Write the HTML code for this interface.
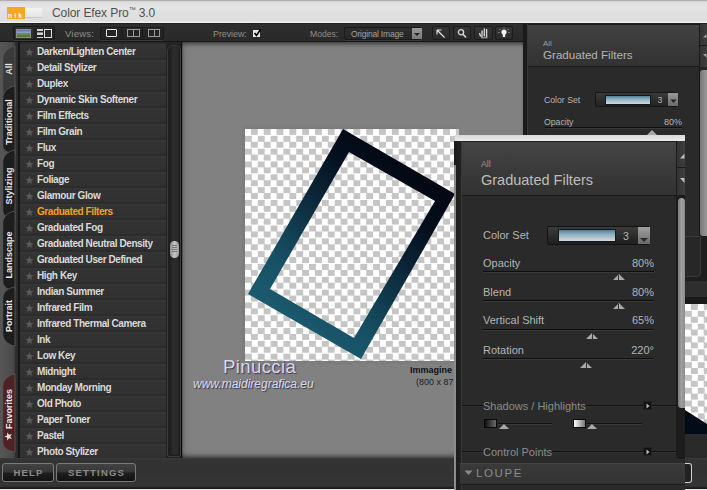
<!DOCTYPE html>
<html><head><meta charset="utf-8">
<style>
*{margin:0;padding:0;box-sizing:border-box}
html,body{width:707px;height:490px;overflow:hidden;background:#2a2a2a;font-family:"Liberation Sans",sans-serif}
div,span,svg{position:absolute}
.tb{font-size:9px;color:#8e8e8e;white-space:nowrap;line-height:10px}
.grp{background:#242424;border:1px solid #1a1a1a;border-radius:2px;box-shadow:inset 0 1px 0 #2e2e2e,0 1px 0 #3a3a3a}
.ib{background:linear-gradient(#353535,#2a2a2a);border:1px solid #1c1c1c;border-radius:2px}
.row{left:0;width:146px;height:16px;background:linear-gradient(#373737 0,#373737 1px,#333 2px,#313131 13px,#2b2b2b 15px)}
.row span{left:17px;top:2px;font-size:10px;font-weight:bold;color:#dedede;white-space:nowrap;letter-spacing:-0.42px;line-height:12px;color:#dadada}
.row svg{left:5px;top:3.5px}
.btn{top:5px;height:19px;border:1px solid #7a7a7a;border-radius:3px;background:linear-gradient(#424242,#363636 48%,#1e1e1e 52%,#121212);color:#8a8a8a;font-size:9.5px;font-weight:bold;letter-spacing:1.2px;text-indent:1.2px;text-align:center;line-height:19px}
.lbl{font-size:11px;color:#b4b4b4;white-space:nowrap;line-height:12px}
.val{font-size:11px;color:#b4b4b4;white-space:nowrap;line-height:12px;text-align:right}
.sl{height:1px;background:#0e0e0e;box-shadow:0 1px 0 #3a3a3a}
.tri{width:0;height:0;border-left:6px solid transparent;border-right:6px solid transparent;border-bottom:6px solid #a8a8a8}
.tl{font-size:9px;font-weight:bold;color:#e6e6e6;white-space:nowrap;transform:rotate(-90deg);transform-origin:0 0;line-height:10px}
</style></head><body>

<div style="left:0;top:0;width:707px;height:24px;background:linear-gradient(#adadad 0,#adadad 1px,#d8d8d8 1px,#e2e2e2 4px,#e6e6e6 8px,#e0e0e0 12px,#dedede 21px,#f2f2f2 22.5px,#f2f2f2 23.3px,#202020 23.5px)"></div>
<div style="left:7px;top:7px;width:18px;height:12px;background:#f5a623"></div>
<div style="left:8px;top:12px;font-size:7px;font-weight:bold;color:#fff;letter-spacing:2px;line-height:7px">nik</div>
<div style="left:25px;top:8px;width:17px;height:10px;background:linear-gradient(#f4f4f4,#e4e4e4);border-bottom:1px solid #c8c8c8"></div>
<div style="left:52px;top:6px;font-size:12px;color:#505050;white-space:nowrap;line-height:14px;letter-spacing:-0.1px">Color Efex Pro<span style="position:relative;font-size:7px;top:-5px">&#8482;</span> 3.0</div>

<div style="left:0;top:24px;width:524px;height:18px;background:linear-gradient(#2e2e2e,#292929);border-bottom:1px solid #161616"></div>
<div class="grp" style="left:13px;top:26px;width:42px;height:14px"></div>
<div style="left:15px;top:28px;width:18px;height:11px;background:#333;border-radius:1px"></div>
<div style="left:16px;top:29px;width:15px;height:9px;border:1px solid #8a8aa8;background:linear-gradient(#5a78b0 0,#8aa2c8 40%,#6a8a50 55%,#4a7030 100%)"></div>
<div style="left:37px;top:29px;width:5.5px;height:1.5px;background:#d0d0d0"></div>
<div style="left:37px;top:31.5px;width:5.5px;height:1px;background:#888"></div>
<div style="left:37px;top:33px;width:5.5px;height:1.5px;background:#d0d0d0"></div>
<div style="left:37px;top:36.5px;width:5.5px;height:1.5px;background:#d0d0d0"></div>
<div style="left:44px;top:29px;width:8px;height:9px;border:1px solid #e0e0e0;background:#2a2a2a"></div>
<div class="tb" style="left:65px;top:29px;font-size:9.5px;letter-spacing:0.2px">Views:</div>
<div class="grp" style="left:100px;top:27px;width:64px;height:13px"></div>
<div style="left:121px;top:28px;width:1px;height:11px;background:#1c1c1c"></div>
<div style="left:142px;top:28px;width:1px;height:11px;background:#1c1c1c"></div>
<div style="left:106px;top:29px;width:11px;height:8px;border:1.5px solid #e8e8e8;border-radius:1px"></div>
<div style="left:127px;top:29px;width:13px;height:8px;border:1px solid #9a9a9a"></div>
<div style="left:133px;top:29px;width:1px;height:8px;background:#9a9a9a"></div>
<div style="left:148px;top:29px;width:12px;height:8px;border:1px solid #9a9a9a"></div>
<div style="left:154px;top:29px;width:1px;height:8px;background:#9a9a9a"></div>
<div class="tb" style="left:213px;top:29px;font-size:9px;letter-spacing:-0.1px">Preview:</div>
<div style="left:253px;top:30px;width:7px;height:7px;background:#e8e8e8"></div>
<svg style="left:252px;top:28px" width="10" height="10" viewBox="0 0 10 10"><path d="M2.5 5 L4.5 7.5 L8.5 1.5" stroke="#000" stroke-width="1.6" fill="none"/></svg>
<div class="tb" style="left:310px;top:29px;font-size:8.6px;letter-spacing:0px">Modes:</div>
<div class="grp" style="left:344px;top:27px;width:78px;height:13px;background:linear-gradient(#2e2e2e,#262626)"></div>
<div class="tb" style="left:351px;top:29px;font-size:8.5px;color:#a0a0a0;letter-spacing:-0.2px">Original Image</div>
<div style="left:412px;top:28px;width:10px;height:11px;background:linear-gradient(#9a9a9a,#7a7a7a)"></div>
<div class="tri" style="left:414px;top:33px;border-left-width:3px;border-right-width:3px;border-bottom:none;border-top:3px solid #222"></div>
<div class="ib" style="left:432px;top:26px;width:18px;height:14px"></div>
<svg style="left:435px;top:28px" width="12" height="11" viewBox="0 0 12 11"><path d="M2.5 2.5 L9.5 9.5 M2 2 L2 6.5 M2 2 L6.5 2" stroke="#e8e8e8" stroke-width="1.1" fill="none"/></svg>
<div class="ib" style="left:453px;top:26px;width:18px;height:14px"></div>
<svg style="left:456px;top:28px" width="12" height="11" viewBox="0 0 12 11"><circle cx="5" cy="4.3" r="2.6" stroke="#d8d8d8" stroke-width="1.3" fill="none"/><path d="M7 6.3 L10 9.5" stroke="#d8d8d8" stroke-width="1.6"/></svg>
<div class="ib" style="left:474px;top:26px;width:19px;height:14px"></div>
<svg style="left:477px;top:27px" width="13" height="12" viewBox="0 0 13 12"><path d="M5 10.5 L5 3.5 M7.3 9.5 L7.3 1.5 M9.6 10.5 L9.6 2 M2.5 6 L3.6 9.5" stroke="#dcdcdc" stroke-width="1.3" fill="none"/><path d="M4 10.8 L10.5 10.8" stroke="#aaa" stroke-width="1"/></svg>
<div class="ib" style="left:495px;top:26px;width:18px;height:14px"></div>
<svg style="left:497px;top:27px" width="14" height="12" viewBox="0 0 14 12"><circle cx="7" cy="5" r="2.6" fill="#f0f0f0"/><rect x="5.8" y="7" width="2.4" height="3" fill="#f0f0f0"/><path d="M7 0.5 L7 1.5 M2.5 2 L3.5 3 M11.5 2 L10.5 3 M1.5 5.5 L2.5 5.5 M12.5 5.5 L11.5 5.5" stroke="#bbb" stroke-width="0.9"/></svg>
<div style="left:522px;top:42px;width:1px;height:416px;background:#9a9a9a"></div>

<div style="left:0;top:42px;width:20.5px;height:416px;background:linear-gradient(90deg,#565656 0,#4c4c4c 12px,#404040 14.5px,#2e2e2e 15px,#2a2a2a 18px,#161616 18.5px)"></div>
<svg style="left:0;top:0" width="20" height="490" viewBox="0 0 20 490"><path d="M15,46 L15,106 C8,105 2.8,103 2.8,97 L2.8,59 C2.8,53 8,47 15,46 Z" fill="#3a3a3a" stroke="#5a5a5a" stroke-width="0.8"/><path d="M15,86 L15,154 C8,153 2.8,151 2.8,145 L2.8,98 C2.8,92 8,87 15,86 Z" fill="#1d1d1d" stroke="#5a5a5a" stroke-width="0.8"/><path d="M15,150 L15,220 C8,219 2.8,216 2.8,210 L2.8,162 C2.8,156 8,151 15,150 Z" fill="#1d1d1d" stroke="#5a5a5a" stroke-width="0.8"/><path d="M15,211 L15,291 C8,290 2.8,287 2.8,281 L2.8,223 C2.8,217 8,212 15,211 Z" fill="#1d1d1d" stroke="#5a5a5a" stroke-width="0.8"/><path d="M15,287 L15,346 C8,345 2.8,340 2.8,334 L2.8,298 C2.8,292 8,288 15,287 Z" fill="#1d1d1d" stroke="#5a5a5a" stroke-width="0.8"/><path d="M15,374 L15,452 C8,451 2.8,448 2.8,442 L2.8,386 C2.8,380 8,375 15,374 Z" fill="#4e2124" stroke="#5a5a5a" stroke-width="0.8"/></svg>
<div class="tl" style="left:3.5px;top:98.5px;width:60px;text-align:center">All</div>
<div class="tl" style="left:3.5px;top:152px;width:60px;text-align:center">Traditional</div>
<div class="tl" style="left:3.5px;top:215.5px;width:60px;text-align:center">Stylizing</div>
<div class="tl" style="left:3.5px;top:285px;width:60px;text-align:center">Landscape</div>
<div class="tl" style="left:3.5px;top:346px;width:60px;text-align:center">Portrait</div>
<div class="tl" style="left:3.5px;top:429px;width:40px;text-align:center">Favorites</div>
<svg style="left:4px;top:431.5px;transform:rotate(-90deg)" width="9" height="9" viewBox="0 0 9 9"><path d="M4.50,0.30 L5.56,3.04 L8.49,3.20 L6.21,5.06 L6.97,7.90 L4.50,6.30 L2.03,7.90 L2.79,5.06 L0.51,3.20 L3.44,3.04Z" fill="#e0e0e0"/></svg>
<div style="left:20px;top:42px;width:146px;height:416px;background:#2a2a2a"></div>
<div class="row" style="left:20px;top:44px"><svg width="9" height="9" viewBox="0 0 9 9"><path d="M4.50,0.30 L5.56,3.04 L8.49,3.20 L6.21,5.06 L6.97,7.90 L4.50,6.30 L2.03,7.90 L2.79,5.06 L0.51,3.20 L3.44,3.04Z" fill="#5c5c5c"/></svg><span>Darken/Lighten Center</span></div>
<div class="row" style="left:20px;top:60px"><svg width="9" height="9" viewBox="0 0 9 9"><path d="M4.50,0.30 L5.56,3.04 L8.49,3.20 L6.21,5.06 L6.97,7.90 L4.50,6.30 L2.03,7.90 L2.79,5.06 L0.51,3.20 L3.44,3.04Z" fill="#5c5c5c"/></svg><span>Detail Stylizer</span></div>
<div class="row" style="left:20px;top:76px"><svg width="9" height="9" viewBox="0 0 9 9"><path d="M4.50,0.30 L5.56,3.04 L8.49,3.20 L6.21,5.06 L6.97,7.90 L4.50,6.30 L2.03,7.90 L2.79,5.06 L0.51,3.20 L3.44,3.04Z" fill="#5c5c5c"/></svg><span>Duplex</span></div>
<div class="row" style="left:20px;top:92px"><svg width="9" height="9" viewBox="0 0 9 9"><path d="M4.50,0.30 L5.56,3.04 L8.49,3.20 L6.21,5.06 L6.97,7.90 L4.50,6.30 L2.03,7.90 L2.79,5.06 L0.51,3.20 L3.44,3.04Z" fill="#5c5c5c"/></svg><span>Dynamic Skin Softener</span></div>
<div class="row" style="left:20px;top:108px"><svg width="9" height="9" viewBox="0 0 9 9"><path d="M4.50,0.30 L5.56,3.04 L8.49,3.20 L6.21,5.06 L6.97,7.90 L4.50,6.30 L2.03,7.90 L2.79,5.06 L0.51,3.20 L3.44,3.04Z" fill="#5c5c5c"/></svg><span>Film Effects</span></div>
<div class="row" style="left:20px;top:124px"><svg width="9" height="9" viewBox="0 0 9 9"><path d="M4.50,0.30 L5.56,3.04 L8.49,3.20 L6.21,5.06 L6.97,7.90 L4.50,6.30 L2.03,7.90 L2.79,5.06 L0.51,3.20 L3.44,3.04Z" fill="#5c5c5c"/></svg><span>Film Grain</span></div>
<div class="row" style="left:20px;top:140px"><svg width="9" height="9" viewBox="0 0 9 9"><path d="M4.50,0.30 L5.56,3.04 L8.49,3.20 L6.21,5.06 L6.97,7.90 L4.50,6.30 L2.03,7.90 L2.79,5.06 L0.51,3.20 L3.44,3.04Z" fill="#5c5c5c"/></svg><span>Flux</span></div>
<div class="row" style="left:20px;top:156px"><svg width="9" height="9" viewBox="0 0 9 9"><path d="M4.50,0.30 L5.56,3.04 L8.49,3.20 L6.21,5.06 L6.97,7.90 L4.50,6.30 L2.03,7.90 L2.79,5.06 L0.51,3.20 L3.44,3.04Z" fill="#5c5c5c"/></svg><span>Fog</span></div>
<div class="row" style="left:20px;top:172px"><svg width="9" height="9" viewBox="0 0 9 9"><path d="M4.50,0.30 L5.56,3.04 L8.49,3.20 L6.21,5.06 L6.97,7.90 L4.50,6.30 L2.03,7.90 L2.79,5.06 L0.51,3.20 L3.44,3.04Z" fill="#5c5c5c"/></svg><span>Foliage</span></div>
<div class="row" style="left:20px;top:188px"><svg width="9" height="9" viewBox="0 0 9 9"><path d="M4.50,0.30 L5.56,3.04 L8.49,3.20 L6.21,5.06 L6.97,7.90 L4.50,6.30 L2.03,7.90 L2.79,5.06 L0.51,3.20 L3.44,3.04Z" fill="#5c5c5c"/></svg><span>Glamour Glow</span></div>
<div class="row" style="left:20px;top:204px"><svg width="9" height="9" viewBox="0 0 9 9"><path d="M4.50,0.30 L5.56,3.04 L8.49,3.20 L6.21,5.06 L6.97,7.90 L4.50,6.30 L2.03,7.90 L2.79,5.06 L0.51,3.20 L3.44,3.04Z" fill="#5c5c5c"/></svg><span style="color:#f5a01e">Graduated Filters</span></div>
<div class="row" style="left:20px;top:220px"><svg width="9" height="9" viewBox="0 0 9 9"><path d="M4.50,0.30 L5.56,3.04 L8.49,3.20 L6.21,5.06 L6.97,7.90 L4.50,6.30 L2.03,7.90 L2.79,5.06 L0.51,3.20 L3.44,3.04Z" fill="#5c5c5c"/></svg><span>Graduated Fog</span></div>
<div class="row" style="left:20px;top:236px"><svg width="9" height="9" viewBox="0 0 9 9"><path d="M4.50,0.30 L5.56,3.04 L8.49,3.20 L6.21,5.06 L6.97,7.90 L4.50,6.30 L2.03,7.90 L2.79,5.06 L0.51,3.20 L3.44,3.04Z" fill="#5c5c5c"/></svg><span>Graduated Neutral Density</span></div>
<div class="row" style="left:20px;top:252px"><svg width="9" height="9" viewBox="0 0 9 9"><path d="M4.50,0.30 L5.56,3.04 L8.49,3.20 L6.21,5.06 L6.97,7.90 L4.50,6.30 L2.03,7.90 L2.79,5.06 L0.51,3.20 L3.44,3.04Z" fill="#5c5c5c"/></svg><span>Graduated User Defined</span></div>
<div class="row" style="left:20px;top:268px"><svg width="9" height="9" viewBox="0 0 9 9"><path d="M4.50,0.30 L5.56,3.04 L8.49,3.20 L6.21,5.06 L6.97,7.90 L4.50,6.30 L2.03,7.90 L2.79,5.06 L0.51,3.20 L3.44,3.04Z" fill="#5c5c5c"/></svg><span>High Key</span></div>
<div class="row" style="left:20px;top:284px"><svg width="9" height="9" viewBox="0 0 9 9"><path d="M4.50,0.30 L5.56,3.04 L8.49,3.20 L6.21,5.06 L6.97,7.90 L4.50,6.30 L2.03,7.90 L2.79,5.06 L0.51,3.20 L3.44,3.04Z" fill="#5c5c5c"/></svg><span>Indian Summer</span></div>
<div class="row" style="left:20px;top:300px"><svg width="9" height="9" viewBox="0 0 9 9"><path d="M4.50,0.30 L5.56,3.04 L8.49,3.20 L6.21,5.06 L6.97,7.90 L4.50,6.30 L2.03,7.90 L2.79,5.06 L0.51,3.20 L3.44,3.04Z" fill="#5c5c5c"/></svg><span>Infrared Film</span></div>
<div class="row" style="left:20px;top:316px"><svg width="9" height="9" viewBox="0 0 9 9"><path d="M4.50,0.30 L5.56,3.04 L8.49,3.20 L6.21,5.06 L6.97,7.90 L4.50,6.30 L2.03,7.90 L2.79,5.06 L0.51,3.20 L3.44,3.04Z" fill="#5c5c5c"/></svg><span>Infrared Thermal Camera</span></div>
<div class="row" style="left:20px;top:332px"><svg width="9" height="9" viewBox="0 0 9 9"><path d="M4.50,0.30 L5.56,3.04 L8.49,3.20 L6.21,5.06 L6.97,7.90 L4.50,6.30 L2.03,7.90 L2.79,5.06 L0.51,3.20 L3.44,3.04Z" fill="#5c5c5c"/></svg><span>Ink</span></div>
<div class="row" style="left:20px;top:348px"><svg width="9" height="9" viewBox="0 0 9 9"><path d="M4.50,0.30 L5.56,3.04 L8.49,3.20 L6.21,5.06 L6.97,7.90 L4.50,6.30 L2.03,7.90 L2.79,5.06 L0.51,3.20 L3.44,3.04Z" fill="#5c5c5c"/></svg><span>Low Key</span></div>
<div class="row" style="left:20px;top:364px"><svg width="9" height="9" viewBox="0 0 9 9"><path d="M4.50,0.30 L5.56,3.04 L8.49,3.20 L6.21,5.06 L6.97,7.90 L4.50,6.30 L2.03,7.90 L2.79,5.06 L0.51,3.20 L3.44,3.04Z" fill="#5c5c5c"/></svg><span>Midnight</span></div>
<div class="row" style="left:20px;top:380px"><svg width="9" height="9" viewBox="0 0 9 9"><path d="M4.50,0.30 L5.56,3.04 L8.49,3.20 L6.21,5.06 L6.97,7.90 L4.50,6.30 L2.03,7.90 L2.79,5.06 L0.51,3.20 L3.44,3.04Z" fill="#5c5c5c"/></svg><span>Monday Morning</span></div>
<div class="row" style="left:20px;top:396px"><svg width="9" height="9" viewBox="0 0 9 9"><path d="M4.50,0.30 L5.56,3.04 L8.49,3.20 L6.21,5.06 L6.97,7.90 L4.50,6.30 L2.03,7.90 L2.79,5.06 L0.51,3.20 L3.44,3.04Z" fill="#5c5c5c"/></svg><span>Old Photo</span></div>
<div class="row" style="left:20px;top:412px"><svg width="9" height="9" viewBox="0 0 9 9"><path d="M4.50,0.30 L5.56,3.04 L8.49,3.20 L6.21,5.06 L6.97,7.90 L4.50,6.30 L2.03,7.90 L2.79,5.06 L0.51,3.20 L3.44,3.04Z" fill="#5c5c5c"/></svg><span>Paper Toner</span></div>
<div class="row" style="left:20px;top:428px"><svg width="9" height="9" viewBox="0 0 9 9"><path d="M4.50,0.30 L5.56,3.04 L8.49,3.20 L6.21,5.06 L6.97,7.90 L4.50,6.30 L2.03,7.90 L2.79,5.06 L0.51,3.20 L3.44,3.04Z" fill="#5c5c5c"/></svg><span>Pastel</span></div>
<div class="row" style="left:20px;top:444px"><svg width="9" height="9" viewBox="0 0 9 9"><path d="M4.50,0.30 L5.56,3.04 L8.49,3.20 L6.21,5.06 L6.97,7.90 L4.50,6.30 L2.03,7.90 L2.79,5.06 L0.51,3.20 L3.44,3.04Z" fill="#5c5c5c"/></svg><span>Photo Stylizer</span></div>
<div style="left:166px;top:42px;width:16px;height:416px;background:#232323"></div>
<div style="left:167px;top:45px;width:14px;height:412px;border-radius:6px 6px 2px 2px;background:#1e1e1e;border:1px solid #3a3a3a"></div><div style="left:169px;top:46px;width:11px;height:409px;border-radius:5.5px;background:linear-gradient(90deg,#1c1c1c,#2c2c2c 40%,#292929 80%,#1a1a1a)"></div>
<div style="left:169.5px;top:240.5px;width:9.5px;height:17px;border-radius:5px;background:linear-gradient(90deg,#8a8a8a,#c4c4c4 50%,#9a9a9a)"></div><div style="left:172px;top:245px;width:5px;height:7px;background:repeating-linear-gradient(#777 0 1px,transparent 1px 2px)"></div>
<div style="left:181px;top:42px;width:1px;height:416px;background:#111"></div>

<div style="left:182px;top:42px;width:341px;height:416px;background:#818181;box-shadow:inset 0 4px 4px -2px #3a3a3a,inset 1px 0 0 #555,inset 7px 0 6px -5px #6a6a6a"></div>
<div style="left:182px;top:451px;width:341px;height:7px;background:linear-gradient(rgba(0,0,0,0),rgba(0,0,0,0.08) 40%,rgba(0,0,0,0.45))"></div>
<div style="left:243px;top:127px;width:214px;height:236px;background:#7a7a7a;filter:blur(1.5px)"></div>
<div style="left:245px;top:129px;width:214px;height:232px;background:repeating-conic-gradient(#c5c5c5 0 25%,#fff 0 50%) 0 0/12.82px 12.82px"></div>
<svg style="left:0;top:0" width="707" height="490" viewBox="0 0 707 490">
<defs><linearGradient id="fg" x1="265" y1="335" x2="405" y2="165" gradientUnits="userSpaceOnUse"><stop offset="0" stop-color="#1d5f74"/><stop offset="0.3" stop-color="#175064"/><stop offset="0.65" stop-color="#0a2436"/><stop offset="0.85" stop-color="#040e1c"/><stop offset="1" stop-color="#020914"/></linearGradient></defs>
<path fill-rule="evenodd" fill="url(#fg)" d="M343,129 L455,194 L361,359 L248,294 Z M349,152 L435,201 L354,338 L270,289 Z"/>
</svg>
<div style="left:223px;top:356.5px;font-size:18.5px;color:#d6d6f0;letter-spacing:0.4px;line-height:20px;text-shadow:1px 1px 1px #3a3a4a;white-space:nowrap">Pinuccia</div>
<div style="left:193px;top:377px;font-size:12px;font-style:italic;color:#d8d8ee;line-height:14px;text-shadow:1px 1px 1px #3a3a4a;white-space:nowrap">www.maidiregrafica.eu</div>
<div style="left:410px;top:365px;font-size:9px;font-weight:bold;color:#111;line-height:11px;white-space:nowrap">Immagine</div>
<div style="left:416px;top:377px;font-size:9px;color:#222;line-height:11px;white-space:nowrap">(800 x 872</div>

<div style="left:523px;top:24px;width:184px;height:466px;background:#2a2a2a"></div><div style="left:523px;top:24px;width:4px;height:466px;background:#1a1a1a"></div><div style="left:527px;top:24px;width:1px;height:466px;background:#383838"></div>
<div style="left:528px;top:24px;width:171px;height:43px;background:linear-gradient(#1c1c1c 0,#1c1c1c 1px,#424242 1px,#393939 22px,#323232 42px);border-bottom:1px solid #1a1a1a"></div>
<div style="left:543px;top:39px;font-size:8px;color:#9a9a9a;line-height:9px">All</div>
<div style="left:543px;top:48px;font-size:11.6px;color:#b4b4b4;line-height:14px;white-space:nowrap">Graduated Filters</div>
<div style="left:699px;top:24px;width:8px;height:466px;background:#262626;border-left:1px solid #161616"></div>
<div style="left:699px;top:24px;width:8px;height:22px;background:linear-gradient(90deg,#333,#3e3e3e);border-left:1px solid #1a1a1a;border-bottom:1px solid #1a1a1a"></div>
<div style="left:699px;top:46px;width:8px;height:21px;background:linear-gradient(90deg,#333,#3e3e3e);border-left:1px solid #1a1a1a"></div>
<svg style="left:700px;top:30px" width="7" height="30" viewBox="0 0 7 30"><path d="M3,7.5 L6.5,4 L6.5,7.5 Z M3,24 L6.5,24 L6.5,27.5 Z" fill="#a8a8a8"/></svg>
<div class="lbl" style="left:544px;top:94px;font-size:8.7px">Color Set</div>
<div style="left:595px;top:92px;width:83px;height:15px;background:linear-gradient(#3a3a3a,#222);border:1px solid #161616;border-radius:2px"></div>
<div style="left:605px;top:95px;width:46px;height:10px;background:linear-gradient(#4f8096 0,#8fb0c0 40%,#c0ccd2 80%,#d4d8d8 100%);border:1px solid #101820"></div>
<div class="lbl" style="left:657.5px;top:94.5px;font-size:8.8px;line-height:10px">3</div>
<div style="left:668px;top:93px;width:10px;height:13px;background:linear-gradient(#9a9a9a,#6a6a6a)"></div>
<svg style="left:670px;top:99px" width="7" height="5" viewBox="0 0 7 5"><path d="M0.5,0.5 L6.5,0.5 L3.5,4 Z" fill="#222"/></svg>
<div class="lbl" style="left:544px;top:116px;font-size:8.7px">Opacity</div>
<div class="val" style="left:640px;top:116px;width:42px;font-size:9px">80%</div>
<div class="sl" style="left:545px;top:127px;width:137px"></div>
<div class="tri" style="left:647px;top:130px;border-left-width:5px;border-right-width:5px;border-bottom-width:5px"></div>
<div style="left:700px;top:70px;width:7px;height:166px;background:linear-gradient(90deg,#777,#9a9a9a);border-radius:3px 0 0 3px"></div>

<div style="left:0;top:458px;width:707px;height:31px;background:linear-gradient(#3a3a3a 0,#333 2px,#323232 15px,#353535 28px,#1a1a1a 30px)"></div>
<div style="left:0;top:489px;width:707px;height:1px;background:#e4e4e4"></div>
<div class="btn" style="left:2px;top:463px;width:52px;line-height:17px">HELP</div>
<div class="btn" style="left:56px;top:463px;width:80px;line-height:17px">SETTINGS</div>

<div style="left:685px;top:236px;width:22px;height:45px;background:#1e1e1e"></div>
<div style="left:684px;top:236px;width:17px;height:41px;background:#272727;border:1px solid #3a3a3a;border-radius:0 0 4px 0"></div>
<div style="left:685px;top:281px;width:22px;height:16px;background:#2e2e2e"></div>
<div style="left:685px;top:297px;width:22px;height:7px;background:#1a1a1a"></div>
<div style="left:685px;top:304px;width:22px;height:130px;background:repeating-conic-gradient(#c5c5c5 0 25%,#fff 0 50%) 0 0/12.82px 12.82px"></div>
<svg style="left:685px;top:400px" width="22" height="40" viewBox="0 0 22 40"><path d="M0,10 L22,24 L22,34 L0,34 Z" fill="#030a18"/></svg>
<div style="left:685px;top:434px;width:22px;height:24px;background:#2a2a2a"></div>
<div style="left:680px;top:463px;width:12px;height:20px;border:1.5px solid #d0d0d0;border-left:none;border-radius:0 3px 3px 0;background:#222"></div>

<div style="left:454.5px;top:135px;width:230.5px;height:355px;background:#2a2a2a"></div>
<div style="left:454.5px;top:134.5px;width:230.5px;height:6.5px;background:linear-gradient(#d8d8d8,#ececec)"></div>
<div style="left:456px;top:141px;width:220px;height:55px;background:linear-gradient(#1e1e1e 0,#1e1e1e 1px,#454545 1px,#3a3a3a 30px,#323232 53px);border-bottom:1px solid #1a1a1a"></div>
<div style="left:454px;top:141px;width:6.5px;height:349px;background:linear-gradient(90deg,#1a1a1a,#222)"></div><div style="left:454px;top:165px;width:2px;height:325px;background:#8c8c8c"></div>
<div style="left:460.5px;top:141px;width:1px;height:349px;background:#383838"></div>
<div style="left:481px;top:159px;font-size:8.8px;color:#9a9a9a;line-height:10px">All</div>
<div style="left:481px;top:172px;font-size:14.5px;color:#bdbdbd;line-height:17px;white-space:nowrap">Graduated Filters</div>
<div style="left:675.5px;top:141px;width:9.5px;height:27px;background:linear-gradient(90deg,#333,#3e3e3e);border-left:1px solid #1a1a1a;border-bottom:1px solid #1a1a1a"></div>
<div style="left:675.5px;top:168px;width:9.5px;height:27px;background:linear-gradient(90deg,#333,#3e3e3e);border-left:1px solid #1a1a1a"></div>
<svg style="left:677px;top:150px" width="8" height="40" viewBox="0 0 8 40"><path d="M3,8.5 L7.5,3.5 L7.5,8.5 Z M3,28 L7.5,28 L7.5,33 Z" fill="#bdbdbd"/></svg>
<div style="left:676px;top:195px;width:9px;height:264px;background:#1c1c1c;border-radius:0 0 0 4px"></div>
<div style="left:677.5px;top:198px;width:7.5px;height:210px;border-radius:4px 4px 0 4px;background:linear-gradient(90deg,#7a7a7a,#a0a0a0 50%,#8c8c8c)"></div>
<div class="lbl" style="left:483px;top:229px;font-size:11px">Color Set</div>
<div style="left:547px;top:226px;width:103px;height:19px;background:linear-gradient(#3c3c3c,#1e1e1e);border:1px solid #141414;border-radius:2px"></div>
<div style="left:558px;top:229px;width:58px;height:13px;background:linear-gradient(#4f8096 0,#8fb0c0 40%,#c0ccd2 80%,#d4d8d8 100%);border:1px solid #101820"></div>
<div class="lbl" style="left:623px;top:229.5px;font-size:10.5px">3</div>
<div style="left:638px;top:227px;width:12px;height:17px;background:linear-gradient(#a0a0a0,#6a6a6a)"></div>
<svg style="left:639px;top:236px" width="10" height="7" viewBox="0 0 10 7"><path d="M1,2 L9,2 L5,6 Z" fill="#2a2a2a"/></svg>

<div class="lbl" style="left:483px;top:256.8px">Opacity</div>
<div class="val" style="left:600px;top:256.8px;width:54px">80%</div>
<div class="sl" style="left:483px;top:271.0px;width:171px"></div>
<div class="tri" style="left:612.5px;top:274.3px"></div>
<div style="left:618.0px;top:274.8px;width:1px;height:6px;background:#333"></div>
<div class="lbl" style="left:483px;top:285.9px">Blend</div>
<div class="val" style="left:600px;top:285.9px;width:54px">80%</div>
<div class="sl" style="left:483px;top:300.09999999999997px;width:171px"></div>
<div class="tri" style="left:612.5px;top:303.4px"></div>
<div style="left:618.0px;top:303.9px;width:1px;height:6px;background:#333"></div>
<div class="lbl" style="left:483px;top:314.2px">Vertical Shift</div>
<div class="val" style="left:600px;top:314.2px;width:54px">65%</div>
<div class="sl" style="left:483px;top:329.2px;width:171px"></div>
<div class="tri" style="left:586.2px;top:332.5px"></div>
<div style="left:591.7px;top:333px;width:1px;height:6px;background:#333"></div>
<div class="lbl" style="left:483px;top:343.9px">Rotation</div>
<div class="val" style="left:600px;top:343.9px;width:54px">220&deg;</div>
<div class="sl" style="left:483px;top:358.2px;width:171px"></div>
<div class="tri" style="left:580px;top:361.5px"></div>
<div style="left:585.5px;top:362px;width:1px;height:6px;background:#333"></div>
<div style="left:462px;top:405px;width:214px;height:1px;background:#111;box-shadow:0 1px 0 #333"></div>
<div class="lbl" style="left:483px;top:400px;color:#8a8a8a;background:#2a2a2a">Shadows / Highlights</div>
<div style="left:643px;top:401px;width:9px;height:9px;background:#111;border:1px solid #222"></div>
<svg style="left:644px;top:402px" width="8" height="8" viewBox="0 0 8 8"><path d="M2.5,1.5 L5.5,4 L2.5,6.5 Z" fill="#bbb"/></svg>
<div style="left:484px;top:419px;width:13px;height:9px;background:linear-gradient(90deg,#101010,#6a6a6a);border:1px solid #0a0a0a"></div>
<div class="sl" style="left:498px;top:423px;width:54px;background:#111"></div>
<div class="tri" style="left:499px;top:424px;border-left-width:5px;border-right-width:5px;border-bottom-width:5px"></div>
<div style="left:573px;top:419px;width:13px;height:9px;background:linear-gradient(90deg,#fff,#777);border:1px solid #0a0a0a"></div>
<div class="sl" style="left:587px;top:423px;width:55px;background:#111"></div>
<div class="tri" style="left:587px;top:424px;border-left-width:5px;border-right-width:5px;border-bottom-width:5px"></div>
<div style="left:462px;top:451px;width:214px;height:1px;background:#111;box-shadow:0 1px 0 #333"></div>
<div class="lbl" style="left:483px;top:446px;color:#8a8a8a;background:#2a2a2a">Control Points</div>
<div style="left:643px;top:447px;width:9px;height:9px;background:#111;border:1px solid #222"></div>
<svg style="left:644px;top:448px" width="8" height="8" viewBox="0 0 8 8"><path d="M2.5,1.5 L5.5,4 L2.5,6.5 Z" fill="#bbb"/></svg>
<div style="left:460px;top:463px;width:225px;height:22px;background:linear-gradient(#3a3a3a,#333);border-top:1px solid #444;border-bottom:1px solid #1a1a1a"></div>
<svg style="left:464px;top:470px" width="9" height="6" viewBox="0 0 9 6"><path d="M0.5,0.5 L8.5,0.5 L4.5,5 Z" fill="#8a8a8a"/></svg>
<div style="left:476px;top:467px;font-size:11.5px;color:#8c8c8c;letter-spacing:1.6px;line-height:13px">LOUPE</div>

</body></html>
